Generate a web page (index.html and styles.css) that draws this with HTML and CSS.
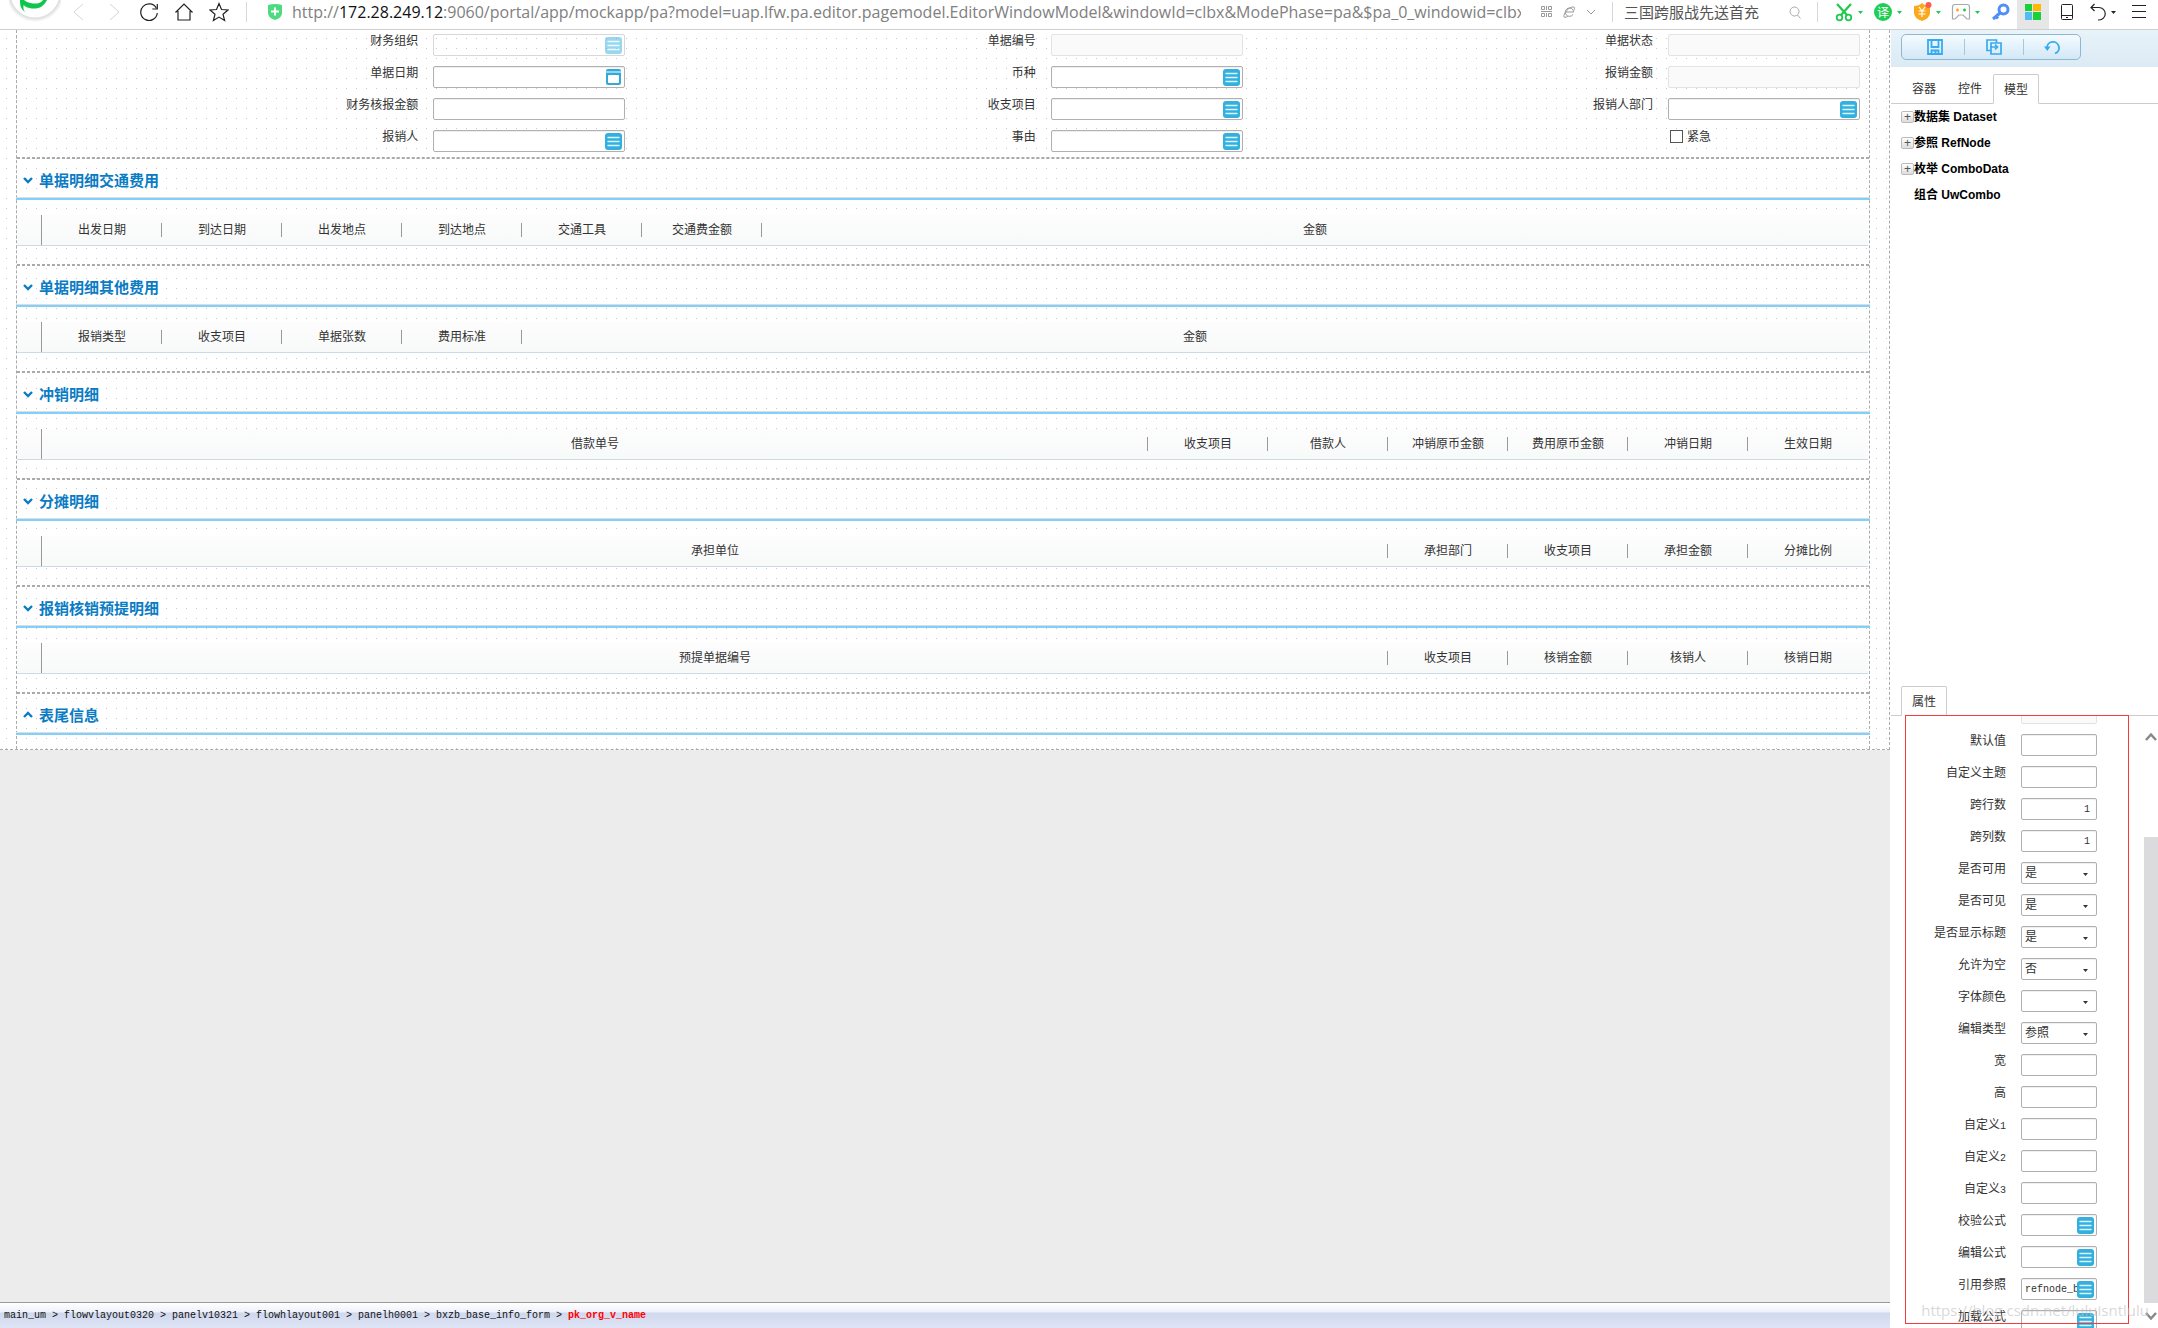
FILE: index.html
```html
<!DOCTYPE html>
<html lang="zh-CN">
<head>
<meta charset="utf-8">
<title>pa editor</title>
<link rel="stylesheet" href="styles.css">
</head>
<body>
<svg class="defs" aria-hidden="true">
  <symbol id="i-list" viewBox="0 0 17 17"><rect width="17" height="17" rx="3" fill="#34b0df"/><path d="M3 4.500h11M3 8.500h11M3 12.500h11" stroke="#d9f6ff" stroke-width="1.400" stroke-linecap="round"/></symbol>
  <symbol id="i-date" viewBox="0 0 17 17"><rect x="1" width="15" height="16" rx="2" fill="#34a9d8"/><rect x="1" y="2" width="15" height="2" fill="#8fd8f2"/><rect x="3" y="6" width="11" height="8" rx="1" fill="#fff"/></symbol>
  <symbol id="i-down" viewBox="0 0 10 8"><path d="M1 2l4 4 4-4" fill="none" stroke="#0a7cc4" stroke-width="2.400"/></symbol>
  <symbol id="i-caret" viewBox="0 0 5 3"><path d="M0 0h5L2.500 3z" fill="currentColor"/></symbol>
</svg>

<header class="browser">
  <button class="logo" aria-label="浏览器"><svg width="52" height="22" viewBox="0 0 52 22"><path d="M11 0c2 6 8 8.500 14 8.500S35 6 38 0h-4c-2 3-6 4-10 3.500C20 3 17 2 15 0z" fill="#0cc74c"/><path d="M11 0c0 6 1 9 5 12-2-3-2-5-1-8L15 0z" fill="#0cc74c"/></svg></button>
  <button class="nav" aria-label="后退"><svg width="20" height="20" viewBox="0 0 20 20"><path d="M14 2l-9 8 9 8" fill="none" stroke="#d6d6d6"/></svg></button>
  <button class="nav" aria-label="前进"><svg width="20" height="20" viewBox="0 0 20 20"><path d="M6 2l9 8-9 8" fill="none" stroke="#d6d6d6"/></svg></button>
  <button class="nav" aria-label="刷新"><svg width="20" height="20" viewBox="0 0 20 20"><path d="M17.500 6.500A8.300 8.300 0 1 0 18.300 11" fill="none" stroke="#222" stroke-width="1.200"/><path d="M18.300 2v5h-5" fill="none" stroke="#222" stroke-width="1.200"/></svg></button>
  <button class="nav" aria-label="主页"><svg width="20" height="20" viewBox="0 0 20 20"><path d="M1.500 10.500L10 2l8.500 8.500M4 9v9h12V9" fill="none" stroke="#222" stroke-width="1.200"/></svg></button>
  <button class="nav" aria-label="收藏"><svg width="20" height="20" viewBox="0 0 20 20"><path d="M10 1.500l2.500 6 6.500.5-5 4.200 1.600 6.300L10 15.100 4.400 18.500 6 12.200 1 8l6.500-.5z" fill="none" stroke="#222" stroke-width="1.200"/></svg></button>
  <span class="sep"></span>
  <span class="safe"><svg width="14" height="16" viewBox="0 0 14 16"><path d="M0 1q7-2 14 0v8q0 5-7 7-7-2-7-7z" fill="#4cdb7f"/><path d="M7 3.500v8M3 7.500h8" stroke="#fff" stroke-width="2"/></svg></span>
  <div class="url">http://<b>172.28.249.12</b>:9060/portal/app/mockapp/pa?model=uap.lfw.pa.editor.pagemodel.EditorWindowModel&amp;windowId=clbx&amp;ModePhase=pa&amp;$pa_0_windowid=clbx</div>
  <button class="mini" aria-label="二维码"><svg width="12" height="12" viewBox="0 0 12 12"><path d="M.5.5h3v3h-3zM5.500 0v4M7.500.5h3v3h-3zM0 5.500h11M.5 7.500h3v3h-3zM5.500 7v4M7.500 7.500h3v3h-3z" fill="none" stroke="#999"/></svg></button>
  <button class="mini" aria-label="内核"><svg width="12" height="12" viewBox="0 0 12 12"><path d="M10 8.500a4.200 4.200 0 1 1 .7-2.500H3M1 11C0 8 6 0 11 1c.8.500.5 2 0 3M1 11c1.500.8 3-.2 4-1" fill="none" stroke="#999"/></svg></button>
  <button class="mini" aria-label="展开"><svg width="10" height="8" viewBox="0 0 10 8"><path d="M1 2l4 4 4-4" fill="none" stroke="#999"/></svg></button>
  <span class="sep sep-a"></span>
  <input class="find" type="text" aria-label="搜索" value="三国跨服战先送首充">
  <button class="look" aria-label="搜索"><svg width="12" height="13" viewBox="0 0 12 13"><circle cx="5.500" cy="5.500" r="4.500" fill="none" stroke="#aaa"/><path d="M8.500 9l3 3.500" stroke="#aaa"/></svg></button>
  <span class="sep sep-b"></span>
  <button class="tool green" aria-label="截图"><svg width="24" height="20" viewBox="0 0 24 20"><path d="M5 2l10 11M19 2L9 13" stroke="#1fc94f" stroke-width="2.200"/><circle cx="7.500" cy="15.500" r="2.800" fill="none" stroke="#1fc94f" stroke-width="1.800"/><circle cx="16.500" cy="15.500" r="2.800" fill="none" stroke="#1fc94f" stroke-width="1.800"/></svg><svg width="5" height="3"><use href="#i-caret"/></svg></button>
  <button class="tool green" aria-label="翻译"><span class="fy">译</span><svg width="5" height="3"><use href="#i-caret"/></svg></button>
  <button class="tool green" aria-label="网银"><svg width="24" height="20" viewBox="0 0 24 20"><path d="M4 4q5 0 8-3 3 3 8 3v7q0 5-8 8-8-3-8-8z" fill="#fba81c"/><path d="M9 5l3 4 3-4M12 9v6M8.500 9h7M8.500 12h7" fill="none" stroke="#fff" stroke-width="1.200"/><circle cx="18.500" cy="3" r="3" fill="#ff5a52"/></svg><svg width="5" height="3"><use href="#i-caret"/></svg></button>
  <button class="tool green" aria-label="游戏"><svg width="24" height="20" viewBox="0 0 24 20"><path d="M6 2.500h12q2.500 0 2.500 2.500v12h-2.500l-4-4h-4l-4 4H3.500V5Q3.500 2.500 6 2.500z" fill="none" stroke="#aaa" stroke-width="1.200"/><path d="M7 8h3M8.500 6.500v3" stroke="#fba81c" stroke-width="1.500"/><path d="M14 8h3M15.500 6.500v3" stroke="#1fc94f" stroke-width="1.500"/></svg><svg width="5" height="3"><use href="#i-caret"/></svg></button>
  <button class="key" aria-label="密码"><svg width="20" height="18" viewBox="0 0 20 18"><circle cx="12.500" cy="6.500" r="4.500" fill="none" stroke="#4f8ff7" stroke-width="3"/><path d="M9 10l-7 6M5 13.500l2 2" stroke="#4f8ff7" stroke-width="3"/></svg></button>
  <button class="tiles" aria-label="扩展"><svg width="16" height="16" viewBox="0 0 16 16"><path d="M0 0h7v7H0z" fill="#18d23c"/><path d="M8 0h8v7H8z" fill="#ffb900"/><path d="M0 8h7v8H0z" fill="#52bdf0"/><path d="M8 8h8v8H8z" fill="#18d23c"/></svg></button>
  <button class="phone" aria-label="手机"><svg width="12" height="16" viewBox="0 0 12 16"><rect x=".5" y=".5" width="11" height="15" rx="1" fill="none" stroke="#222"/><path d="M1 11.500h10M5 13.500h2" stroke="#222"/></svg></button>
  <button class="undo" aria-label="撤销"><svg width="18" height="18" viewBox="0 0 18 18"><path d="M2 4.500h8a5.500 5.500 0 0 1 0 12.500H9M5.500 1L2 4.500 5.500 8" fill="none" stroke="#222" stroke-width="1.200"/></svg><svg width="5" height="3"><use href="#i-caret"/></svg></button>
  <button class="menu" aria-label="菜单"><svg width="14" height="14" viewBox="0 0 14 14"><path d="M0 .5h14M0 6.500h14M0 12.500h14" stroke="#222"/></svg></button>
</header>

<div class="work">
<main class="editor">
  <div class="canvas">
  <div class="content">
    <form class="form">
      <div class="row"><label for="f1">财务组织</label><div class="field faded"><input id="f1" type="text" disabled><button type="button" class="pick" aria-label="选择" disabled><svg width="17" height="17"><use href="#i-list"/></svg></button></div></div>
      <div class="row"><label for="f2">单据编号</label><div class="field"><input id="f2" type="text" disabled></div></div>
      <div class="row"><label for="f3">单据状态</label><div class="field"><input id="f3" type="text" disabled></div></div>
      <div class="row"><label for="f4">单据日期</label><div class="field"><input id="f4" type="text"><button type="button" class="pick" aria-label="日期"><svg width="17" height="17"><use href="#i-date"/></svg></button></div></div>
      <div class="row"><label for="f5">币种</label><div class="field"><input id="f5" type="text"><button type="button" class="pick" aria-label="选择"><svg width="17" height="17"><use href="#i-list"/></svg></button></div></div>
      <div class="row"><label for="f6">报销金额</label><div class="field"><input id="f6" type="text" disabled></div></div>
      <div class="row"><label for="f7">财务核报金额</label><div class="field"><input id="f7" type="text"></div></div>
      <div class="row"><label for="f8">收支项目</label><div class="field"><input id="f8" type="text"><button type="button" class="pick" aria-label="选择"><svg width="17" height="17"><use href="#i-list"/></svg></button></div></div>
      <div class="row"><label for="f9">报销人部门</label><div class="field"><input id="f9" type="text"><button type="button" class="pick" aria-label="选择"><svg width="17" height="17"><use href="#i-list"/></svg></button></div></div>
      <div class="row"><label for="f10">报销人</label><div class="field"><input id="f10" type="text"><button type="button" class="pick" aria-label="选择"><svg width="17" height="17"><use href="#i-list"/></svg></button></div></div>
      <div class="row"><label for="f11">事由</label><div class="field"><input id="f11" type="text"><button type="button" class="pick" aria-label="选择"><svg width="17" height="17"><use href="#i-list"/></svg></button></div></div>
      <div class="row"><div class="field check"><input id="f12" type="checkbox"><label for="f12">紧急</label></div></div>
    </form>

    <section class="group">
      <h2><svg width="10" height="8"><use href="#i-down"/></svg>单据明细交通费用</h2>
      <table><tr><td class="num"></td><th class="c">出发日期</th><th class="c">到达日期</th><th class="c">出发地点</th><th class="c">到达地点</th><th class="c">交通工具</th><th class="c">交通费金额</th><th>金额</th></tr></table>
    </section>
    <section class="group">
      <h2><svg width="10" height="8"><use href="#i-down"/></svg>单据明细其他费用</h2>
      <table><tr><td class="num"></td><th class="c">报销类型</th><th class="c">收支项目</th><th class="c">单据张数</th><th class="c">费用标准</th><th>金额</th></tr></table>
    </section>
    <section class="group">
      <h2><svg width="10" height="8"><use href="#i-down"/></svg>冲销明细</h2>
      <table><tr><td class="num"></td><th>借款单号</th><th class="c">收支项目</th><th class="c">借款人</th><th class="c">冲销原币金额</th><th class="c">费用原币金额</th><th class="c">冲销日期</th><th class="c">生效日期</th></tr></table>
    </section>
    <section class="group">
      <h2><svg width="10" height="8"><use href="#i-down"/></svg>分摊明细</h2>
      <table><tr><td class="num"></td><th>承担单位</th><th class="c">承担部门</th><th class="c">收支项目</th><th class="c">承担金额</th><th class="c">分摊比例</th></tr></table>
    </section>
    <section class="group">
      <h2><svg width="10" height="8"><use href="#i-down"/></svg>报销核销预提明细</h2>
      <table><tr><td class="num"></td><th>预提单据编号</th><th class="c">收支项目</th><th class="c">核销金额</th><th class="c">核销人</th><th class="c">核销日期</th></tr></table>
    </section>
    <section class="group closed">
      <h2><svg class="flip" width="10" height="8"><use href="#i-down"/></svg>表尾信息</h2>
    </section>
  </div>
  </div>
  <footer class="path">main_um &gt; flowvlayout0320 &gt; panelv10321 &gt; flowhlayout001 &gt; panelh0001 &gt; bxzb_base_info_form &gt; <b>pk_org_v_name</b></footer>
</main>

<aside class="side">
  <div class="bar">
    <div class="acts">
      <button aria-label="保存"><svg width="16" height="16" viewBox="0 0 16 16"><path d="M1 1h14v14H1zM4.500 1v7h7V1M4.500 15v-3.500h7V15M8.500 12v3" fill="none" stroke="#37aaf0" stroke-width="1.800"/></svg></button>
      <button aria-label="导出"><svg width="16" height="16" viewBox="0 0 16 16"><path d="M10.500 4V1H1v10.500h4M5 4h10v11H5zM4 8h7M9 5.500L11.500 8 9 10.500" fill="none" stroke="#37aaf0" stroke-width="1.700"/></svg></button>
      <button aria-label="撤销"><svg width="16" height="16" viewBox="0 0 16 16"><path d="M3 9a6 6 0 1 1 8 5.500" fill="none" stroke="#37aaf0" stroke-width="1.800"/><path d="M0 7.500h6.500L3.300 12z" fill="#37aaf0"/></svg></button>
    </div>
  </div>
  <nav class="tabs"><button>容器</button><button>控件</button><button class="on">模型</button></nav>
  <ul class="tree">
    <li><button class="plus" aria-label="展开">+</button>数据集 Dataset</li>
    <li><button class="plus" aria-label="展开">+</button>参照 RefNode</li>
    <li><button class="plus" aria-label="展开">+</button>枚举 ComboData</li>
    <li class="leaf">组合 UwCombo</li>
  </ul>
  <div class="props">
    <nav class="tabs low"><button class="on">属性</button></nav>
    <div class="pane">
      <form class="list">
        <div class="prow"><span></span><div class="field"><input type="text" aria-label="字段" disabled></div></div>
        <div class="prow"><label for="p1">默认值</label><div class="field"><input id="p1" type="text"></div></div>
        <div class="prow"><label for="p2">自定义主题</label><div class="field"><input id="p2" type="text"></div></div>
        <div class="prow"><label for="p3">跨行数</label><div class="field"><input id="p3" class="r" type="text" value="1"></div></div>
        <div class="prow"><label for="p4">跨列数</label><div class="field"><input id="p4" class="r" type="text" value="1"></div></div>
        <div class="prow"><label for="p5">是否可用</label><div class="field"><select id="p5"><option>是</option><option>否</option></select><svg class="arr" width="5" height="3"><use href="#i-caret"/></svg></div></div>
        <div class="prow"><label for="p6">是否可见</label><div class="field"><select id="p6"><option>是</option><option>否</option></select><svg class="arr" width="5" height="3"><use href="#i-caret"/></svg></div></div>
        <div class="prow"><label for="p7">是否显示标题</label><div class="field"><select id="p7"><option>是</option><option>否</option></select><svg class="arr" width="5" height="3"><use href="#i-caret"/></svg></div></div>
        <div class="prow"><label for="p8">允许为空</label><div class="field"><select id="p8"><option>否</option><option>是</option></select><svg class="arr" width="5" height="3"><use href="#i-caret"/></svg></div></div>
        <div class="prow"><label for="p9">字体颜色</label><div class="field"><select id="p9"><option></option></select><svg class="arr" width="5" height="3"><use href="#i-caret"/></svg></div></div>
        <div class="prow"><label for="p10">编辑类型</label><div class="field"><select id="p10"><option>参照</option></select><svg class="arr" width="5" height="3"><use href="#i-caret"/></svg></div></div>
        <div class="prow"><label for="p11">宽</label><div class="field"><input id="p11" type="text"></div></div>
        <div class="prow"><label for="p12">高</label><div class="field"><input id="p12" type="text"></div></div>
        <div class="prow"><label for="p13">自定义<code>1</code></label><div class="field"><input id="p13" type="text"></div></div>
        <div class="prow"><label for="p14">自定义<code>2</code></label><div class="field"><input id="p14" type="text"></div></div>
        <div class="prow"><label for="p15">自定义<code>3</code></label><div class="field"><input id="p15" type="text"></div></div>
        <div class="prow"><label for="p16">校验公式</label><div class="field"><input id="p16" type="text"><button type="button" class="pick" aria-label="选择"><svg width="17" height="17"><use href="#i-list"/></svg></button></div></div>
        <div class="prow"><label for="p17">编辑公式</label><div class="field"><input id="p17" type="text"><button type="button" class="pick" aria-label="选择"><svg width="17" height="17"><use href="#i-list"/></svg></button></div></div>
        <div class="prow"><label for="p18">引用参照</label><div class="field"><input id="p18" type="text" value="refnode_bxzb"><button type="button" class="pick" aria-label="选择"><svg width="17" height="17"><use href="#i-list"/></svg></button></div></div>
        <div class="prow"><label for="p19">加载公式</label><div class="field"><input id="p19" type="text"><button type="button" class="pick" aria-label="选择"><svg width="17" height="17"><use href="#i-list"/></svg></button></div></div>
      </form>
      <div class="scroll">
        <svg width="12" height="10" viewBox="0 0 12 10"><path d="M1 8l5-5.500L11 8" fill="none" stroke="#888" stroke-width="2.500"/></svg>
        <div class="thumb"></div>
        <svg width="12" height="10" viewBox="0 0 12 10"><path d="M1 2l5 5.500L11 2" fill="none" stroke="#888" stroke-width="2.500"/></svg>
      </div>
      <div class="mark"></div>
      <div class="water">https://blog.csdn.net/luluisntlulu</div>
    </div>
  </div>
</aside>
</div>
</body>
</html>
```
FILE: styles.css
```css
* { box-sizing: border-box; }
body {
  margin: 0;
  height: 100vh;
  display: flex;
  flex-direction: column;
  overflow: hidden;
  background: #fff;
  color: #333;
  font: 12px/14px "Liberation Sans", "Noto Sans CJK SC", sans-serif;
}
button { border: 0; padding: 0; background: none; color: inherit; font: inherit; }
svg { display: block; }
.defs { position: absolute; width: 0; height: 0; }

/* browser bar */
.browser {
  flex: none;
  display: flex;
  height: 30px;
  border-bottom: 1px solid #cfcfcf;
  padding-left: 8px;
}
.browser > * {
  flex: none;
  display: flex;
  align-items: center;
  justify-content: center;
  padding-bottom: 5px;
}
.browser .logo { width: 53px; align-items: flex-start; padding: 0; }
.logo svg { background: radial-gradient(circle at 26px -7px, #fff 24px, #ddd 25px, #fff 29px); }
.nav { width: 35px; }
.browser .sep { width: 1px; height: 20px; margin: 2px 10px 0; padding: 0; background: #d8d8d8; }
.browser .sep-b { margin: 2px 14px 0 7px; }
.safe { width: 35px; }
.browser .url {
  flex: 1;
  min-width: 0;
  justify-content: flex-start;
  overflow: hidden;
  white-space: nowrap;
  color: #808080;
  font: 16px/24px "Open Sans", sans-serif;
}
.url b { color: #111; font-weight: 400; }
.mini { width: 22px; }
.url + .mini { margin-left: 15px; }
.browser .find {
  width: 156px;
  border: 0;
  padding: 0 0 6px 1px;
  background: none;
  color: #555;
  font: 15px/22px "Noto Sans CJK SC", sans-serif;
}
.look { width: 31px; }
.browser .tool { width: 39px; justify-content: flex-start; gap: 2px; color: #1fc94f; }
.fy {
  width: 18px;
  height: 18px;
  margin: 0 3px;
  border-radius: 50%;
  background: #1fce55;
  color: #fff;
  font: 12px/17px "Noto Sans CJK SC", sans-serif;
  text-align: center;
}
.key { width: 25px; margin-right: 4px; }
.tiles { width: 32px; background: #e6e6e6; }
.phone { width: 36px; }
.undo { width: 34px; gap: 4px; color: #222; }
.menu { width: 39px; }

/* workspace */
.work { flex: 1; min-height: 0; display: grid; grid-template-columns: 1fr 268px; }
.editor { display: flex; flex-direction: column; min-width: 0; background: #ececec; }
.canvas {
  padding: 0 19px 0 16px;
  border: dashed #aaa;
  border-width: 0 1px 1px 0;
  background: #fff conic-gradient(from 90deg at 9px 9px, #c8c8c8 25%, transparent 0) -3px -1px / 10px 10px;
}
.content { border: dashed #aaa; border-width: 0 1px; }
.form {
  display: grid;
  grid-template-columns: repeat(3, 1fr);
  gap: 10px 0;
  padding: 4px 0 5px;
  border-bottom: 1px dashed #aaa;
}
.row { display: flex; justify-content: flex-end; gap: 15px; height: 22px; padding-right: 9px; }
.row label, .prow label {
  margin-top: -1px;
  font-family: "Noto Sans CJK SC", sans-serif;
  white-space: nowrap;
}
.field { position: relative; width: 192px; height: 22px; }
.field input[type="text"], .field select {
  display: block;
  width: 100%;
  height: 22px;
  margin: 0;
  padding: 0 3px;
  border: 1px solid #b0b0b0;
  border-radius: 2px;
  background: #fff;
  box-shadow: inset 0 1px 1px #eee;
  color: #333;
  font: 10px/20px "Liberation Mono", monospace;
}
.field input[type="text"]:disabled { border-color: #e3e3e3; background: #fafafa; box-shadow: none; }
.field.faded input[type="text"]:disabled { border-color: #d8d8d8; background: transparent; }
.field input.r { padding-right: 6px; text-align: right; }
.field select { padding-bottom: 2px; appearance: none; font: 12px/18px "Noto Sans CJK SC", sans-serif; }
.pick { position: absolute; right: 3px; top: 3px; }
.faded .pick { opacity: 0.5; }
.arr { position: absolute; right: 9px; top: 11px; }
.check { display: flex; gap: 4px; padding-left: 2px; }
.check input { width: 13px; height: 13px; margin: 0; appearance: none; border: 1px solid #555; background: #fff; }

/* detail groups */
.group { border: dashed #aaa; border-width: 1px 0; padding-bottom: 18px; }
.group h2 {
  display: flex;
  align-items: center;
  gap: 6px;
  height: 41px;
  margin: 0 -1px;
  padding: 2px 0 0 7px;
  border-bottom: 2px solid #80d0ff;
  box-shadow: inset 0 -1px #ddd;
  color: #0a7cc4;
  font: bold 15px/20px "Noto Sans CJK SC", sans-serif;
}
.flip { transform: rotate(180deg); }
.group table {
  width: calc(100% - 1px);
  height: 31px;
  margin-top: 15px;
  border-spacing: 0;
  table-layout: fixed;
  background: linear-gradient(#fdfdfd, #f8f9f9);
  border-bottom: 1px solid #ccdae3;
}
.group th {
  padding: 0 0 2px;
  background: linear-gradient(#999, #999) right center / 1px 14px no-repeat;
  font: 12px/14px "Noto Sans CJK SC", sans-serif;
  text-align: center;
}
.group th:last-child { background: none; }
.c { width: 120px; }
.num { width: 25px; padding: 0; border-right: 1px solid #999; }
.closed { padding-bottom: 14px; border-bottom: 0; }

.path {
  height: 26px;
  margin-top: auto;
  padding: 1px 4px 0;
  border-top: 1px solid #999;
  background: linear-gradient(#fff, #eef1f9 9px, #d0d8ec 10px, #dfe5f6);
  color: #111;
  font: 10px/24px "Liberation Mono", monospace;
  white-space: nowrap;
}
.path b { color: #f00; }

/* side panel */
.side { display: flex; flex-direction: column; min-height: 0; padding-left: 1px; overflow: hidden; }
.bar { flex: none; height: 37px; padding: 4px 10px; background: linear-gradient(#e8f3fa, #dbeaf4); }
.acts {
  display: flex;
  width: 180px;
  height: 26px;
  padding-left: 3px;
  border: 1px solid #8fb8d0;
  border-radius: 5px;
  background: linear-gradient(#f4fbff, #d3e8f6);
}
.acts button {
  width: 60px;
  display: flex;
  align-items: center;
  justify-content: center;
  background: linear-gradient(#a5c8db, #a5c8db) right center / 1px 16px no-repeat;
}
.acts button:last-child { width: 56px; background: none; }
.tabs {
  flex: none;
  display: flex;
  height: 37px;
  padding: 7px 0 0 10px;
  box-shadow: inset 0 -1px #ccc;
  font: 12px/14px "Noto Sans CJK SC", sans-serif;
}
.tabs button { width: 46px; padding-bottom: 2px; border: 1px solid transparent; }
.tabs .on { padding-bottom: 0; border-color: #ccc; border-bottom-color: #fff; border-radius: 2px 2px 0 0; background: #fff; }
.tree {
  flex: 1;
  margin: 0;
  padding: 0 0 0 10px;
  list-style: none;
  color: #000;
  font: bold 12px/26px "Liberation Sans", "Noto Sans CJK SC", sans-serif;
}
.tree li { display: flex; align-items: center; height: 26px; }
.tree .leaf { padding-left: 13px; }
.plus {
  width: 13px;
  height: 12px;
  border: 1px solid #bbb;
  border-radius: 2px;
  background: linear-gradient(#fff, #ddd);
  color: #555;
  font: 12px/10px "Liberation Sans", sans-serif;
}
.props { flex: 0 0 642px; min-height: 0; display: flex; flex-direction: column; }
.tabs.low { height: 30px; padding-top: 0; }
.pane {
  position: relative;
  flex: 1;
  min-height: 0;
  display: flex;
  justify-content: space-between;
  margin-top: -1px;
  overflow: hidden;
}
.list { margin-top: -13px; display: flex; flex-direction: column; gap: 10px; }
.prow { flex: none; display: grid; grid-template-columns: 115px 76px; gap: 15px; height: 22px; }
.prow label { text-align: right; }
.prow .field { width: 76px; }
.prow code { font: 10px/14px "Liberation Mono", monospace; }
.scroll { width: 14px; display: flex; flex-direction: column; align-items: center; padding: 17px 0 7px; }
.thumb { flex: 1; width: 14px; margin: 95px 0 8px; background: #dbdbdd; }
.scroll svg { flex: none; }
.mark { position: absolute; left: 14px; top: 0; bottom: 4px; width: 224px; border: 1px solid #f53b3b; }
.water {
  position: absolute;
  right: 9px;
  bottom: 8px;
  color: rgba(190, 190, 190, 0.6);
  font: 15px/20px "Open Sans", sans-serif;
}
```
